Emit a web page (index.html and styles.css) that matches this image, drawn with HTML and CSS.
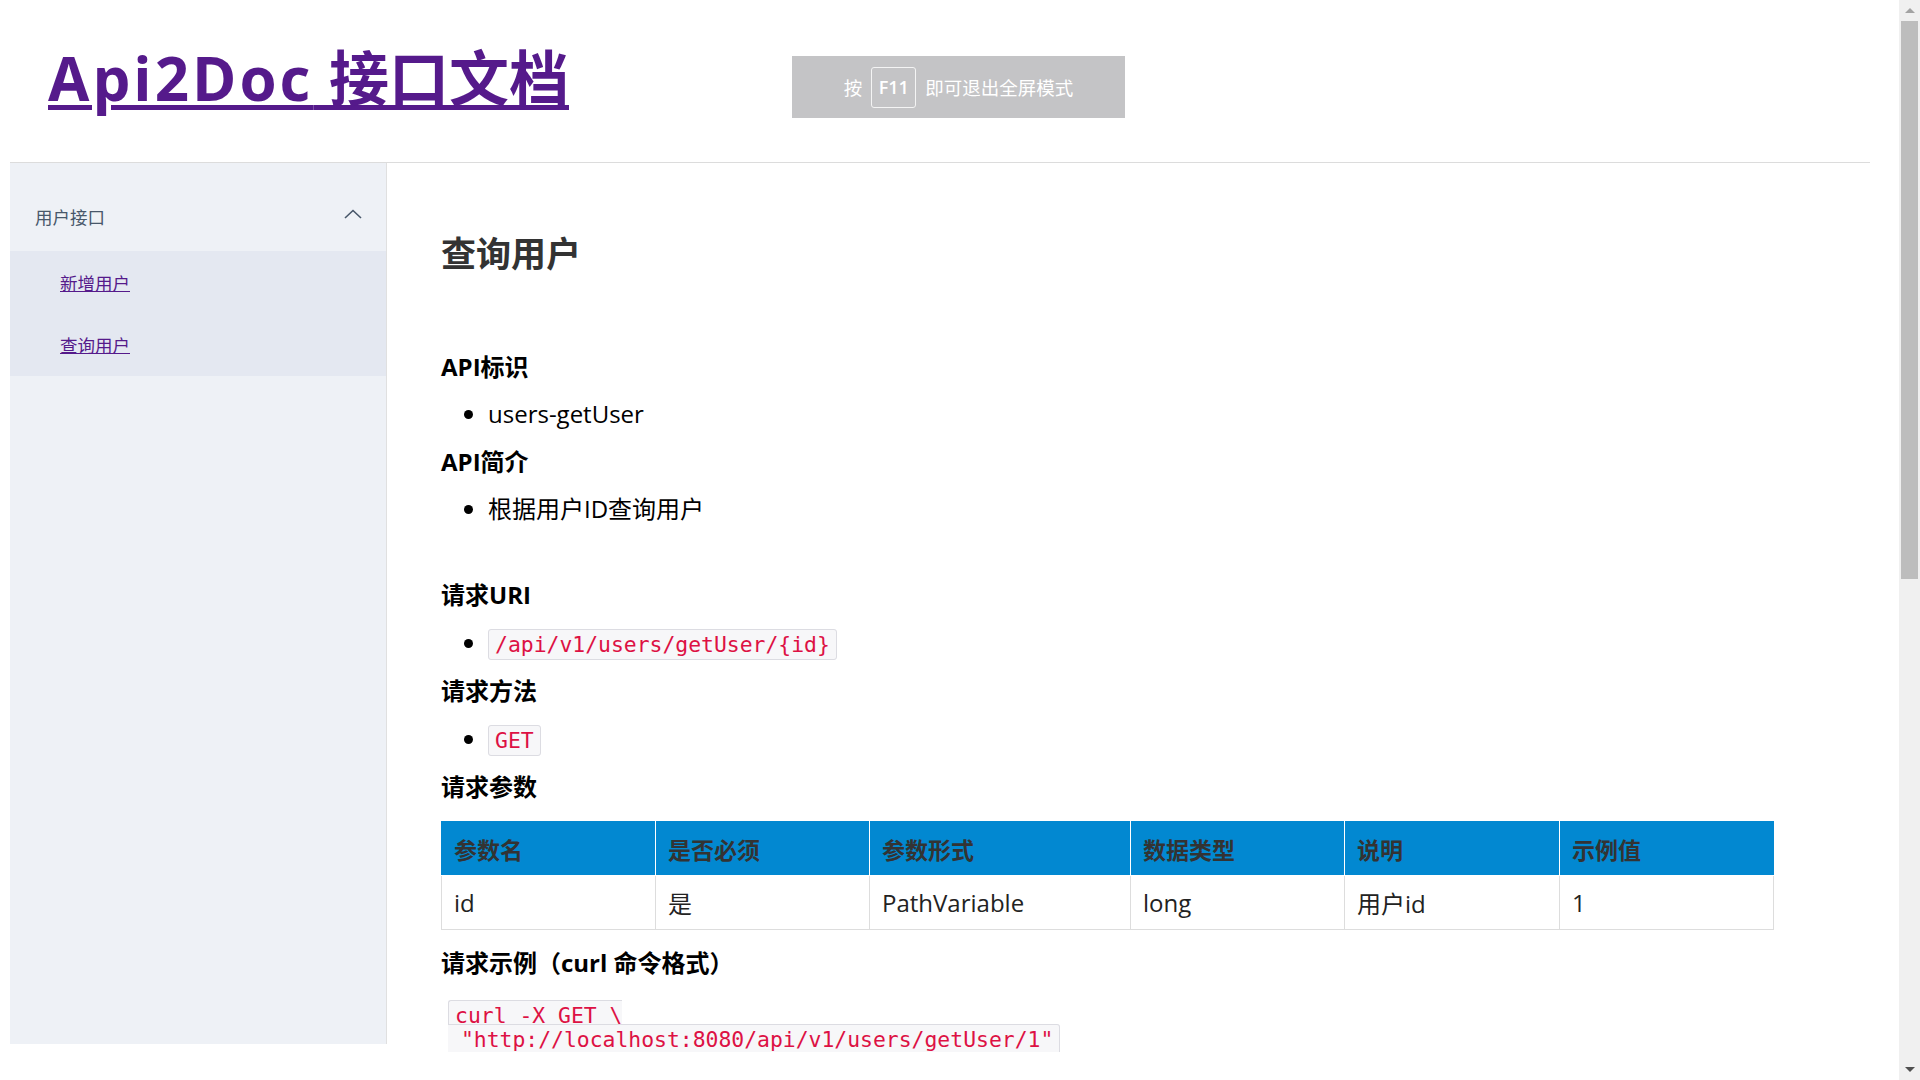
FILE: index.html
```html
<!DOCTYPE html>
<html lang="zh-CN">
<head>
<meta charset="utf-8">
<title>Api2Doc 接口文档</title>
<link rel="stylesheet" href="styles.css">
</head>
<body>
<div class="page">
  <header class="header">
    <h1 class="title"><a href="#"><span class="latin">Api2Doc</span> 接口文档</a></h1>
  </header>
  <div class="layout">
    <aside class="sidebar">
      <nav class="menu">
        <div class="menu-title">
          <span>用户接口</span>
          <svg class="chevron" width="18" height="10" viewBox="0 0 18 10"><path d="M1 9 L9 1.5 L17 9" fill="none" stroke="#48576a" stroke-width="1.6"/></svg>
        </div>
        <ul class="submenu">
          <li class="submenu-item"><a href="#">新增用户</a></li>
          <li class="submenu-item"><a href="#">查询用户</a></li>
        </ul>
      </nav>
    </aside>
    <main class="content">
      <h2 class="api-name">查询用户</h2>

      <section class="section first">
        <h4 class="label">API标识</h4>
        <ul class="items"><li>users-getUser</li></ul>
        <h4 class="label">API简介</h4>
        <ul class="items"><li>根据用户ID查询用户</li></ul>
      </section>

      <section class="section second">
        <h4 class="label">请求URI</h4>
        <ul class="items"><li><code>/api/v1/users/getUser/{id}</code></li></ul>
        <h4 class="label">请求方法</h4>
        <ul class="items"><li><code>GET</code></li></ul>
        <h4 class="label">请求参数</h4>
        <table class="params">
          <colgroup>
            <col class="c1"><col class="c2"><col class="c3"><col class="c4"><col class="c5"><col class="c6">
          </colgroup>
          <thead>
            <tr><th>参数名</th><th>是否必须</th><th>参数形式</th><th>数据类型</th><th>说明</th><th>示例值</th></tr>
          </thead>
          <tbody>
            <tr><td>id</td><td>是</td><td>PathVariable</td><td>long</td><td>用户id</td><td>1</td></tr>
          </tbody>
        </table>
        <h4 class="label after-table">请求示例（curl 命令格式）</h4>
<pre class="example"><code>curl -X GET \
 "http://localhost:8080/api/v1/users/getUser/1"</code></pre>
      </section>
    </main>
  </div>
</div>
<div class="fs-bubble">按 <kbd class="key">F11</kbd> 即可退出全屏模式</div>
<div class="scrollbar" aria-hidden="true">
  <div class="sb-arrow up"></div>
  <div class="sb-track"><div class="sb-thumb"></div></div>
  <div class="sb-arrow down"></div>
</div>
</body>
</html>
```

FILE: styles.css
```css
html {
  background: #ffffff;
}

body {
  margin: 10px;
  font-family: "Open Sans", "Noto Sans CJK SC", sans-serif;
  color: #000;
}

.page {
  width: 1860px;
}

.header {
  height: 153px;
  box-sizing: border-box;
  border-bottom: 1px solid #dcdcdc;
  padding: 32px 0 0 38px;
}
.title {
  margin: 0;
  font-family: "Open Sans", "Noto Sans CJK SC", sans-serif;
  font-size: 60px;
  font-weight: 700;
  line-height: 72px;
}
.title .latin {
  letter-spacing: 3px;
}
.title a {
  color: #551a8b;
  text-decoration: underline;
  text-decoration-thickness: 5px;
  text-underline-offset: 4px;
}

.layout {
  display: flex;
  align-items: flex-start;
}

.sidebar {
  flex: 0 0 376px;
  height: 881px;
  background: #eef1f6;
  border-right: 1px solid #e0e0e0;
}
.menu {
  padding-top: 18px;
}
.menu-title {
  height: 70px;
  display: flex;
  align-items: center;
  justify-content: space-between;
  padding: 0 24px 0 25px;
  font-family: "Noto Sans CJK SC", sans-serif;
  font-size: 17.5px;
  color: #48576a;
}
.chevron {
  display: block;
  margin-top: -4px;
}
.submenu {
  list-style: none;
  margin: 0;
  padding: 0;
  background: #e4e8f1;
}
.submenu-item {
  height: 62.5px;
  display: flex;
  align-items: center;
  padding-left: 50px;
  font-family: "Noto Sans CJK SC", sans-serif;
  font-size: 17.5px;
}
.submenu-item a {
  color: #551a8b;
  text-decoration: underline;
}

.content {
  flex: 1;
  padding-left: 54px;
  padding-right: 97px;
}

.api-name {
  margin: 68px 0 0 0;
  font-family: "Noto Sans CJK SC", sans-serif;
  font-size: 35px;
  line-height: 41px;
  font-weight: 700;
  color: #333;
}

.section.first {
  margin-top: 71px;
}
.section.second {
  margin-top: 39px;
}

.label {
  margin: 0;
  font-size: 24px;
  height: 47.3px;
  line-height: 47.3px;
  font-weight: 700;
  color: #000;
}
.items {
  margin: 0;
  padding-left: 47px;
  font-size: 24px;
}
.items li {
  height: 47.3px;
  line-height: 47.3px;
}
.second .label,
.second .items li {
  height: 48px;
  line-height: 48px;
}
.second .label.after-table {
  margin-top: 9px;
  height: 47px;
  line-height: 47px;
}

code {
  font-family: "DejaVu Sans Mono", monospace;
  font-size: 21.4px;
  color: #dd1144;
  background: #f7f7f9;
  border: 1px solid #dcdce2;
  border-radius: 3px;
  padding: 2px 6px;
}

.params {
  width: 1332px;
  table-layout: fixed;
  border-collapse: collapse;
  margin-top: 10px;
  font-size: 24px;
}
.c1, .c2, .c4, .c6 { width: 214px; }
.c3 { width: 261px; }
.c5 { width: 215px; }
.params th {
  background: #0288d1;
  color: #333;
  text-align: left;
  font-weight: 700;
  font-size: 23px;
  height: 53px;
  padding: 0 12px;
  border: 1px solid #ffffff;
  border-top-color: #0288d1;
  font-family: "Noto Sans CJK SC", sans-serif;
}
.params th:first-child { border-left-color: #0288d1; }
.params th:last-child { border-right-color: #0288d1; }
.params td {
  height: 53px;
  padding: 0 12px;
  border: 1px solid #dddddd;
  color: #222;
}

.example {
  margin: 18px 0 0 0;
  padding-left: 7px;
  font-family: "DejaVu Sans Mono", monospace;
  font-size: 21.4px;
  line-height: 24px;
}

.fs-bubble {
  position: absolute;
  left: 792px;
  top: 56px;
  width: 333px;
  height: 62px;
  background: #c4c4c6;
  display: flex;
  align-items: center;
  justify-content: center;
  gap: 9px;
  font-family: "Noto Sans CJK SC", sans-serif;
  font-size: 18.5px;
  color: #ffffff;
}
.key {
  display: inline-flex;
  align-items: center;
  justify-content: center;
  width: 45px;
  height: 41px;
  box-sizing: border-box;
  border: 1px solid #f4f4f4;
  border-radius: 3px;
  font-family: "Open Sans", sans-serif;
  font-weight: 600;
  font-size: 18px;
  color: #ffffff;
}

.scrollbar {
  position: fixed;
  top: 0;
  right: 0;
  width: 21px;
  height: 100vh;
  background: #f0f0f0;
  display: flex;
  flex-direction: column;
}
.sb-arrow {
  height: 21px;
  flex: 0 0 21px;
  display: flex;
  align-items: center;
  justify-content: center;
}
.sb-arrow.up::before {
  content: "";
  border-left: 5px solid transparent;
  border-right: 5px solid transparent;
  border-bottom: 5px solid #a3a3a3;
}
.sb-arrow.down::before {
  content: "";
  border-left: 5px solid transparent;
  border-right: 5px solid transparent;
  border-top: 5px solid #505050;
}
.sb-track {
  flex: 1;
  padding: 0 2px;
}
.sb-thumb {
  height: 558px;
  background: #bdbdbd;
}
```
